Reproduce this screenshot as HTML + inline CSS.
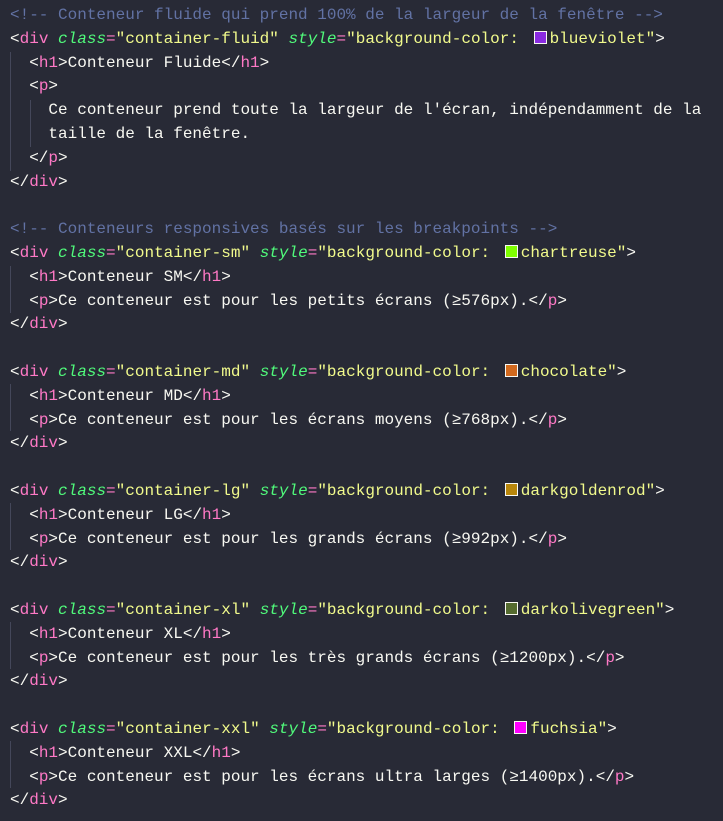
<!DOCTYPE html>
<html><head><meta charset="utf-8"><style>
body{margin:0;background:#282a36;width:723px;height:821px;overflow:hidden}
pre{margin:0;position:absolute;left:10px;top:4px;font-family:"Liberation Mono",monospace;font-size:16px;line-height:23.79px;color:#f8f8f2}
.c{color:#6272a4}.t{color:#ff79c6}.a{color:#50fa7b;font-style:italic}.s{color:#f1fa8c}
.sw{display:inline-block;width:11px;height:11px;border:1px solid #f8f8f2;margin:0 3px 0 5px;vertical-align:-1px}
.g{position:absolute;width:1px;background:#44475a}
</style></head><body>
<div class="g" style="left:10px;top:52px;height:119px"></div>
<div class="g" style="left:30px;top:100px;height:47px"></div>
<div class="g" style="left:10px;top:266px;height:47px"></div>
<div class="g" style="left:10px;top:384px;height:47px"></div>
<div class="g" style="left:10px;top:503px;height:47px"></div>
<div class="g" style="left:10px;top:622px;height:47px"></div>
<div class="g" style="left:10px;top:741px;height:47px"></div>
<pre><span class="c">&lt;!-- Conteneur fluide qui prend 100% de la largeur de la fenêtre --&gt;</span>
&lt;<span class="t">div</span> <span class="a">class</span><span class="t">=</span><span class="s">"container-fluid"</span> <span class="a">style</span><span class="t">=</span><span class="s">"background-color: <span class="sw" style="background:blueviolet"></span>blueviolet"</span>&gt;
  &lt;<span class="t">h1</span>&gt;Conteneur Fluide&lt;/<span class="t">h1</span>&gt;
  &lt;<span class="t">p</span>&gt;
    Ce conteneur prend toute la largeur de l'écran, indépendamment de la
    taille de la fenêtre.
  &lt;/<span class="t">p</span>&gt;
&lt;/<span class="t">div</span>&gt;

<span class="c">&lt;!-- Conteneurs responsives basés sur les breakpoints --&gt;</span>
&lt;<span class="t">div</span> <span class="a">class</span><span class="t">=</span><span class="s">"container-sm"</span> <span class="a">style</span><span class="t">=</span><span class="s">"background-color: <span class="sw" style="background:chartreuse"></span>chartreuse"</span>&gt;
  &lt;<span class="t">h1</span>&gt;Conteneur SM&lt;/<span class="t">h1</span>&gt;
  &lt;<span class="t">p</span>&gt;Ce conteneur est pour les petits écrans (≥576px).&lt;/<span class="t">p</span>&gt;
&lt;/<span class="t">div</span>&gt;

&lt;<span class="t">div</span> <span class="a">class</span><span class="t">=</span><span class="s">"container-md"</span> <span class="a">style</span><span class="t">=</span><span class="s">"background-color: <span class="sw" style="background:chocolate"></span>chocolate"</span>&gt;
  &lt;<span class="t">h1</span>&gt;Conteneur MD&lt;/<span class="t">h1</span>&gt;
  &lt;<span class="t">p</span>&gt;Ce conteneur est pour les écrans moyens (≥768px).&lt;/<span class="t">p</span>&gt;
&lt;/<span class="t">div</span>&gt;

&lt;<span class="t">div</span> <span class="a">class</span><span class="t">=</span><span class="s">"container-lg"</span> <span class="a">style</span><span class="t">=</span><span class="s">"background-color: <span class="sw" style="background:darkgoldenrod"></span>darkgoldenrod"</span>&gt;
  &lt;<span class="t">h1</span>&gt;Conteneur LG&lt;/<span class="t">h1</span>&gt;
  &lt;<span class="t">p</span>&gt;Ce conteneur est pour les grands écrans (≥992px).&lt;/<span class="t">p</span>&gt;
&lt;/<span class="t">div</span>&gt;

&lt;<span class="t">div</span> <span class="a">class</span><span class="t">=</span><span class="s">"container-xl"</span> <span class="a">style</span><span class="t">=</span><span class="s">"background-color: <span class="sw" style="background:darkolivegreen"></span>darkolivegreen"</span>&gt;
  &lt;<span class="t">h1</span>&gt;Conteneur XL&lt;/<span class="t">h1</span>&gt;
  &lt;<span class="t">p</span>&gt;Ce conteneur est pour les très grands écrans (≥1200px).&lt;/<span class="t">p</span>&gt;
&lt;/<span class="t">div</span>&gt;

&lt;<span class="t">div</span> <span class="a">class</span><span class="t">=</span><span class="s">"container-xxl"</span> <span class="a">style</span><span class="t">=</span><span class="s">"background-color: <span class="sw" style="background:fuchsia"></span>fuchsia"</span>&gt;
  &lt;<span class="t">h1</span>&gt;Conteneur XXL&lt;/<span class="t">h1</span>&gt;
  &lt;<span class="t">p</span>&gt;Ce conteneur est pour les écrans ultra larges (≥1400px).&lt;/<span class="t">p</span>&gt;
&lt;/<span class="t">div</span>&gt;</pre>
</body></html>
